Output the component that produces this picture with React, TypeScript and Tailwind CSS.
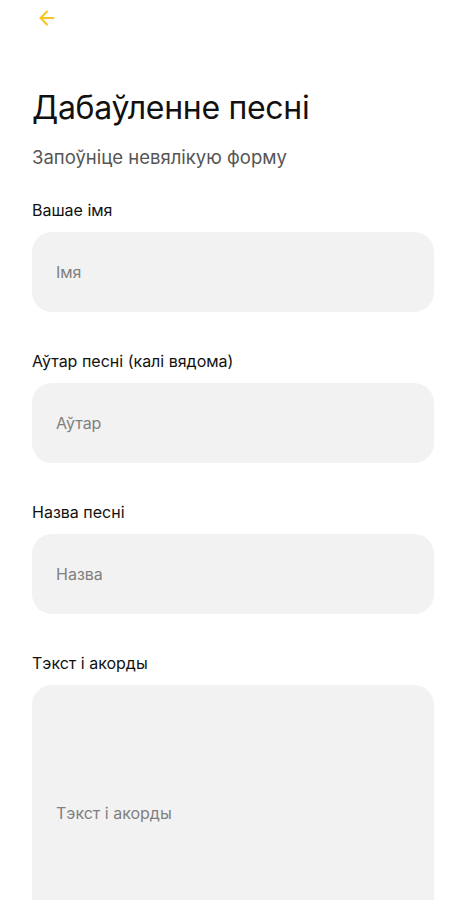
import { ArrowLeft } from 'lucide-react'

const fields = [
  { label: 'Вашае імя', placeholder: 'Імя' },
  { label: 'Аўтар песні (калі вядома)', placeholder: 'Аўтар' },
  { label: 'Назва песні', placeholder: 'Назва' },
]

export default function App() {
  return (
    <div className="min-h-screen bg-white px-8 font-['Inter',sans-serif] text-[#111]">
      <div className="h-[35px] flex items-center">
        <ArrowLeft className="w-[22px] h-[22px] text-[#f7c51e] ml-[4px]" strokeWidth={2.2} />
      </div>

      <h1 className="mt-[53px] text-[32px] leading-[40px] tracking-[-0.3px]">Дабаўленне песні</h1>
      <p className="mt-[17px] text-[18.5px] leading-[24px] text-[#555]">Запоўніце невялікую форму</p>

      <div className="mt-[31px] flex flex-col">
        {fields.map((f) => (
          <div key={f.label} className="mb-[39px]">
            <label className="block text-[16px] leading-[20px] mb-[12px]">{f.label}</label>
            <div className="h-[80px] rounded-[20px] bg-[#f2f2f2] flex items-center px-6">
              <span className="text-[16px] text-[#808080]">{f.placeholder}</span>
            </div>
          </div>
        ))}
        <div>
          <label className="block text-[16px] leading-[20px] mb-[12px]">Тэкст і акорды</label>
          <div className="h-[256px] rounded-[20px] bg-[#f2f2f2] flex items-center px-6">
            <span className="text-[16px] text-[#808080]">Тэкст і акорды</span>
          </div>
        </div>
      </div>
    </div>
  )
}
